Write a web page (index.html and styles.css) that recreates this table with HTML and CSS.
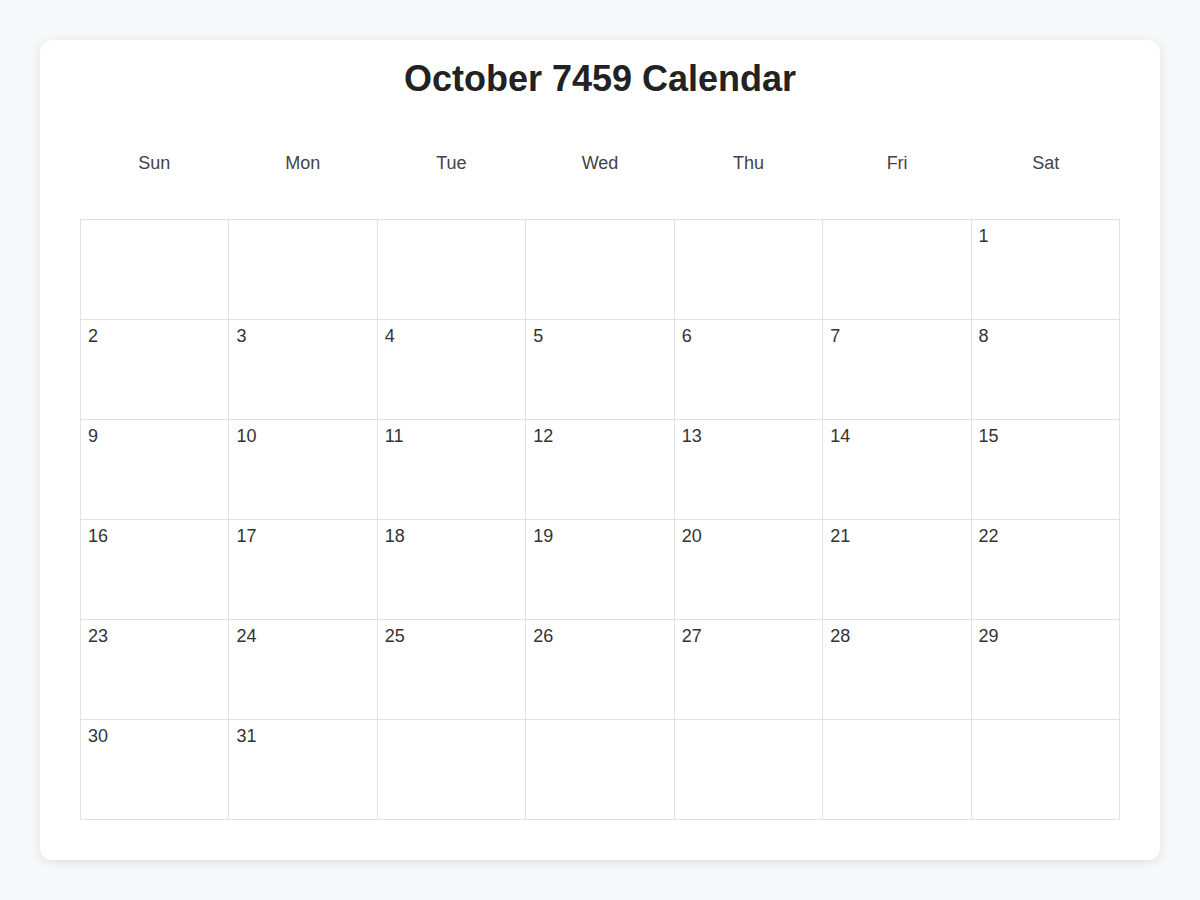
FILE: index.html
```html
<!DOCTYPE html>
<html lang="en">
<head>
<meta charset="utf-8">
<title>October 7459 Calendar</title>
<link rel="stylesheet" href="styles.css">
</head>
<body>
<div class="card">
  <h1 class="title">October 7459 Calendar</h1>
  <div class="weekdays">
    <div class="wd">Sun</div><div class="wd">Mon</div><div class="wd">Tue</div><div class="wd">Wed</div><div class="wd">Thu</div><div class="wd">Fri</div><div class="wd">Sat</div>
  </div>
  <div class="grid">
    <div class="cell"></div><div class="cell"></div><div class="cell"></div><div class="cell"></div><div class="cell"></div><div class="cell"></div><div class="cell">1</div>
    <div class="cell">2</div><div class="cell">3</div><div class="cell">4</div><div class="cell">5</div><div class="cell">6</div><div class="cell">7</div><div class="cell">8</div>
    <div class="cell">9</div><div class="cell">10</div><div class="cell">11</div><div class="cell">12</div><div class="cell">13</div><div class="cell">14</div><div class="cell">15</div>
    <div class="cell">16</div><div class="cell">17</div><div class="cell">18</div><div class="cell">19</div><div class="cell">20</div><div class="cell">21</div><div class="cell">22</div>
    <div class="cell">23</div><div class="cell">24</div><div class="cell">25</div><div class="cell">26</div><div class="cell">27</div><div class="cell">28</div><div class="cell">29</div>
    <div class="cell">30</div><div class="cell">31</div><div class="cell"></div><div class="cell"></div><div class="cell"></div><div class="cell"></div><div class="cell"></div>
  </div>
</div>
</body>
</html>
```
FILE: styles.css
```css
html, body {
  margin: 0;
  padding: 0;
}
body {
  background: #f7f8fa;
  font-family: "Liberation Sans", Arial, sans-serif;
  color: #333;
  padding: 40px;
}
.card {
  background: #fff;
  border-radius: 12px;
  box-shadow: 0 2px 10px rgba(0, 0, 0, 0.1);
  padding: 18px 40px 40px;
  height: 820px;
  box-sizing: border-box;
}
.title {
  margin: 0 0 18px;
  font-size: 36px;
  line-height: 41px;
  font-weight: 700;
  color: #222;
  text-align: center;
}
.weekdays {
  display: grid;
  grid-template-columns: repeat(7, 1fr);
  padding: 36px 0;
  margin-bottom: 9px;
}
.wd {
  text-align: center;
  font-size: 18px;
  line-height: 21px;
  color: #444;
}
.grid {
  display: grid;
  grid-template-columns: repeat(7, 1fr);
  grid-auto-rows: 100px;
  border-top: 1px solid #e2e2e2;
  border-left: 1px solid #e2e2e2;
}
.cell {
  border-right: 1px solid #e2e2e2;
  border-bottom: 1px solid #e2e2e2;
  padding: 6px 7px;
  font-size: 18px;
  line-height: 21px;
  color: #333;
}
```
